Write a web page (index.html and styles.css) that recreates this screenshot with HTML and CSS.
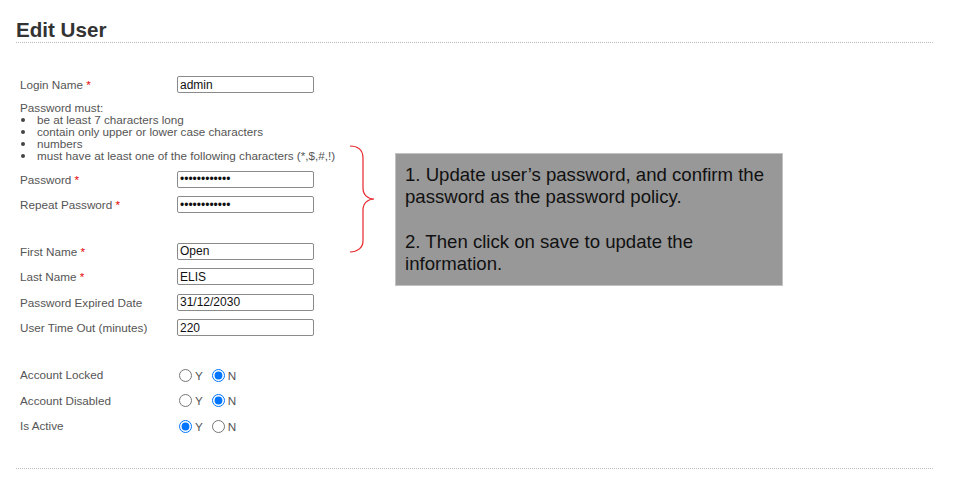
FILE: index.html
```html
<!DOCTYPE html>
<html>
<head>
<meta charset="utf-8">
<title>Edit User</title>
<link rel="stylesheet" href="styles.css">
</head>
<body>
<div class="page">
  <h1 class="title">Edit User</h1>
  <form class="form">
    <div class="row"><span class="label">Login Name <span class="req">*</span></span><input class="field" type="text" value="admin"></div>
    <div class="policy">
      <div class="policy-head">Password must:</div>
      <ul class="policy-list">
        <li class="policy-item">be at least 7 characters long</li>
        <li class="policy-item">contain only upper or lower case characters</li>
        <li class="policy-item">numbers</li>
        <li class="policy-item">must have at least one of the following characters (*,$,#,!)</li>
      </ul>
    </div>
    <div class="row"><span class="label">Password <span class="req">*</span></span><input class="field" type="password" value="abcdefghijkl"></div>
    <div class="row"><span class="label">Repeat Password <span class="req">*</span></span><input class="field" type="password" value="abcdefghijkl"></div>
    <div class="spacer"></div>
    <div class="row"><span class="label">First Name <span class="req">*</span></span><input class="field" type="text" value="Open"></div>
    <div class="row"><span class="label">Last Name <span class="req">*</span></span><input class="field" type="text" value="ELIS"></div>
    <div class="row"><span class="label">Password Expired Date</span><input class="field" type="text" value="31/12/2030"></div>
    <div class="row"><span class="label">User Time Out (minutes)</span><input class="field" type="text" value="220"></div>
    <div class="spacer spacer-b"></div>
    <div class="row"><span class="label">Account Locked</span>
      <span class="radios"><label class="opt"><input class="radio" type="radio" name="locked">Y</label><label class="opt"><input class="radio" type="radio" name="locked" checked>N</label></span></div>
    <div class="row"><span class="label">Account Disabled</span>
      <span class="radios"><label class="opt"><input class="radio" type="radio" name="disabled">Y</label><label class="opt"><input class="radio" type="radio" name="disabled" checked>N</label></span></div>
    <div class="row"><span class="label">Is Active</span>
      <span class="radios"><label class="opt"><input class="radio" type="radio" name="active" checked>Y</label><label class="opt"><input class="radio" type="radio" name="active">N</label></span></div>
  </form>
  <div class="footer-line"></div>
</div>

<svg class="brace" width="40" height="112" viewBox="0 0 40 112">
  <path d="M5 2 C12 2 18 5 18 14 L18 44 C18 51 23 55 29 55 C23 55 18 59 18 66 L18 97 C18 104 12 108 5 108" fill="none" stroke="#e8252a" stroke-width="1.2"/>
</svg>

<div class="callout">
  1. Update user’s password, and confirm the<br>
  password as the password policy.<br>
  <br>
  2. Then click on save to update the<br>
  information.
</div>
</body>
</html>
```

FILE: styles.css
```css
html, body {
  margin: 0;
  padding: 0;
  background: #fff;
}
body {
  font-family: "Liberation Sans", Arial, sans-serif;
  color: #555;
  position: relative;
  width: 953px;
  height: 477px;
  overflow: hidden;
}
.page {
  padding: 18px 20px 0 16px;
}
.title {
  margin: 0;
  font-size: 20.6px;
  line-height: 23px;
  font-weight: bold;
  color: #333;
  padding-bottom: 1px;
  border-bottom: 1px dotted #bbb;
}
.form {
  margin: 29px 0 0 4px;
}
.row {
  display: flex;
  align-items: center;
  height: 25.5px;
}
.label {
  width: 157px;
  flex: none;
  font-size: 11.7px;
  color: #555;
}
.req {
  color: #e60000;
}
.field {
  box-sizing: border-box;
  width: 137px;
  height: 17px;
  margin: 0;
  padding: 0 2px;
  border: 1px solid #8a8a8a;
  border-radius: 2px;
  font-family: "Liberation Sans", Arial, sans-serif;
  font-size: 12px;
  color: #111;
  background: #fff;
}
.policy {
  margin: 4px 0 5px 0;
  font-size: 11.7px;
  line-height: 12px;
  color: #555;
}
.policy-list {
  list-style: none;
  margin: 0;
  padding: 0;
}
.policy-item {
  display: flex;
  align-items: center;
}
.policy-item::before {
  content: "";
  width: 4px;
  height: 4px;
  border-radius: 50%;
  background: #444;
  margin: 1px 12px 0 1px;
  flex: none;
}
.spacer {
  height: 21px;
}
.spacer-b {
  height: 21.5px;
}
.radios {
  display: flex;
  align-items: center;
  font-size: 11.7px;
  color: #555;
  padding-top: 1px;
}
.opt {
  display: inline-flex;
  align-items: center;
  margin-right: 7px;
}
.radio {
  width: 13px;
  height: 13px;
  margin: 0 3px 0 2px;
}
.footer-line {
  margin-top: 29.5px;
  border-top: 1px dotted #bbb;
}
.brace {
  position: absolute;
  left: 345px;
  top: 144px;
}
.callout {
  position: absolute;
  left: 395px;
  top: 153px;
  width: 388px;
  height: 133px;
  box-sizing: border-box;
  padding: 10px 0 0 9px;
  background: #989898;
  border: 1px solid #c2c2c2;
  font-size: 18.6px;
  line-height: 22.3px;
  color: #111;
}
```
